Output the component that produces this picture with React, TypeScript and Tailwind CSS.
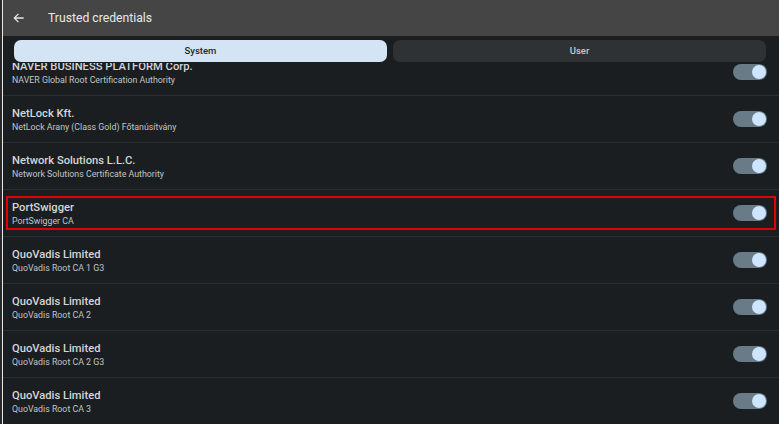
import React from "react";

const rows: { title: string; sub: string; hl?: boolean }[] = [
  { title: "NAVER BUSINESS PLATFORM Corp.", sub: "NAVER Global Root Certification Authority" },
  { title: "NetLock Kft.", sub: "NetLock Arany (Class Gold) Főtanúsítvány" },
  { title: "Network Solutions L.L.C.", sub: "Network Solutions Certificate Authority" },
  { title: "PortSwigger", sub: "PortSwigger CA", hl: true },
  { title: "QuoVadis Limited", sub: "QuoVadis Root CA 1 G3" },
  { title: "QuoVadis Limited", sub: "QuoVadis Root CA 2" },
  { title: "QuoVadis Limited", sub: "QuoVadis Root CA 2 G3" },
  { title: "QuoVadis Limited", sub: "QuoVadis Root CA 3" },
];

function Toggle() {
  return (
    <div className="relative w-[34px] h-[16px] rounded-full bg-[#687b87] shrink-0">
      <div className="absolute right-[1px] top-[1px] w-[14px] h-[14px] rounded-full bg-[#cde6fd]" />
    </div>
  );
}

export default function App() {
  return (
    <div
      className="w-[779px] h-[424px] overflow-hidden bg-[#1b1e21] flex"
      style={{ fontFamily: "Roboto, 'Noto Sans', sans-serif" }}
    >
      <div className="w-[2px] shrink-0 bg-[#2a2a2a]" />
      <div className="w-[1px] shrink-0 bg-[#e8e8e8]" />
      <div className="flex-1 flex flex-col min-w-0">
        <div className="h-[36px] bg-[#454545] flex items-center shrink-0">
          <svg width="14" height="14" viewBox="0 0 24 24" className="ml-[9px]" fill="none" stroke="#e6e6e6" strokeWidth="2.2">
            <path d="M20 12H5M11 5l-7 7 7 7" />
          </svg>
          <span className="ml-[22px] text-[12.2px] text-[#e8e8e8]">Trusted credentials</span>
        </div>
        <div className="h-[27px] shrink-0 flex gap-[6px] pl-[11px] pr-[13px] pt-[4px] relative z-10 bg-[#1b1e21]">
          <div className="flex-1 h-[22px] rounded-[7px] bg-[#d3e5f5] flex items-center justify-center text-[9.5px] text-[#1d2730] font-medium">
            System
          </div>
          <div className="flex-1 h-[22px] rounded-[7px] bg-[#2f3235] flex items-center justify-center text-[9.5px] text-[#c6c8ca] font-medium">
            User
          </div>
        </div>
        <div className="flex-1 overflow-hidden">
          <div className="-mt-[14px]">
            {rows.map((r, i) => (
              <div key={i} className="h-[47px] border-b border-[#2b2e31] flex items-center px-[3px]">
                <div
                  className={
                    "flex-1 h-[34px] flex items-center pl-[4px] pr-[7px] border-2 " +
                    (r.hl ? "border-[#e00000]" : "border-transparent")
                  }
                >
                  <div className="flex-1 flex flex-col pt-[1px]">
                    <span className="text-[11.2px] leading-[15px] font-medium text-[#d4d6d8]">{r.title}</span>
                    <span className="text-[8.8px] leading-[12px] text-[#c2c4c6]">{r.sub}</span>
                  </div>
                  <Toggle />
                </div>
              </div>
            ))}
          </div>
        </div>
      </div>
    </div>
  );
}
